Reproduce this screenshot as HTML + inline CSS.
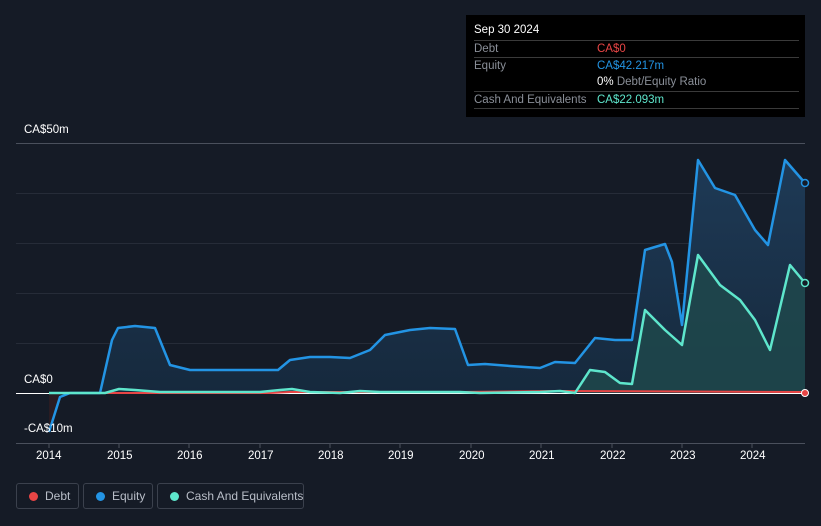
<!DOCTYPE html>
<html><head><meta charset="utf-8"><style>
html,body{margin:0;padding:0;background:#151b26;width:821px;height:526px;overflow:hidden;font-family:"Liberation Sans",sans-serif}
.tt{position:absolute;left:466px;top:15px;width:339px;height:102px;background:#000;}
.tt .h{position:absolute;left:8px;top:9px;color:#fff;font-size:11.5px}
.row{position:absolute;left:8px;width:325px;border-top:1px solid #3a3a3a;height:17px;font-size:11.5px;color:#8a8f98;white-space:nowrap}
.row span{position:absolute;top:2px}
.lg{position:absolute;top:483px;height:26px;border:1px solid #3b414d;border-radius:3px;color:#b9bec8;font-size:12px;box-sizing:border-box;white-space:nowrap}
.lg i{position:absolute;left:12px;top:8px;width:9px;height:9px;border-radius:50%}
.lg span{position:absolute;left:28px;top:5px}
.ax{position:absolute;color:#fff;font-size:11.5px}
</style></head><body>
<svg width="821" height="526" style="position:absolute;left:0;top:0">
<defs><linearGradient id="g" x1="0" y1="0" x2="0" y2="1"><stop offset="0" stop-color="#1e3a56"/><stop offset="1" stop-color="#16293d"/></linearGradient></defs>
<line x1="16" y1="143.5" x2="805" y2="143.5" stroke="#4a505c"/>
<line x1="16" y1="193.5" x2="805" y2="193.5" stroke="#262c38"/>
<line x1="16" y1="243.5" x2="805" y2="243.5" stroke="#262c38"/>
<line x1="16" y1="293.5" x2="805" y2="293.5" stroke="#262c38"/>
<line x1="16" y1="343.5" x2="805" y2="343.5" stroke="#262c38"/>
<line x1="16" y1="443.5" x2="805" y2="443.5" stroke="#4a505c"/>
<polygon points="49,393 49,432 60,393" fill="#2a1c22"/>
<polygon fill="url(#g)" points="60,393 100,393 112,340 118,328 135,326 155,328 170,365 190,370 230,370 260,370 278,370 290,360 310,357 330,357 350,358 370,350 385,335 410,330 430,328 455,329 468,365 485,364 510,366 540,368 555,362 575,363 595,338 615,340 632,340 645,250 665,244 672,262 682,325 698,160 715,188 735,195 755,230 768,245 785,160 805,183 805,393"/>
<polygon fill="#1f4a4c" fill-opacity="0.8" points="575,393 590,370 605,372 620,383 632,384 645,310 665,330 682,345 698,255 720,285 740,300 755,320 770,350 790,265 805,283 805,393"/>
<line x1="16" y1="393.5" x2="805" y2="393.5" stroke="#fff" stroke-width="1"/>
<polyline fill="none" stroke="#e84545" stroke-width="2" points="49,393 270,393 290,392 460,392 560,391 805,392"/>
<polyline fill="none" stroke="#2394e4" stroke-width="2.5" stroke-linejoin="round" points="49,432 60,397 70,393 100,393 112,340 118,328 135,326 155,328 170,365 190,370 230,370 260,370 278,370 290,360 310,357 330,357 350,358 370,350 385,335 410,330 430,328 455,329 468,365 485,364 510,366 540,368 555,362 575,363 595,338 615,340 632,340 645,250 665,244 672,262 682,325 698,160 715,188 735,195 755,230 768,245 785,160 805,183"/>
<polyline fill="none" stroke="#5ee6cc" stroke-width="2.5" stroke-linejoin="round" points="49,393 105,393 119,389 135,390 160,392 260,392 280,390 292,389 310,392 340,393 360,391 380,392 460,392 480,393 540,392 560,391 575,393 590,370 605,372 620,383 632,384 645,310 665,330 682,345 698,255 720,285 740,300 755,320 770,350 790,265 805,283"/>
<circle cx="805" cy="183" r="3.5" fill="#151b26" stroke="#2394e4" stroke-width="1.5"/>
<circle cx="805" cy="283" r="3.5" fill="#151b26" stroke="#5ee6cc" stroke-width="1.5"/>
<circle cx="805" cy="393" r="3.5" fill="#e84545" stroke="#fff" stroke-width="1"/>
<g stroke="#4a505c"><line x1="49" y1="443" x2="49" y2="448"/><line x1="119" y1="443" x2="119" y2="448"/><line x1="189" y1="443" x2="189" y2="448"/><line x1="260" y1="443" x2="260" y2="448"/><line x1="330" y1="443" x2="330" y2="448"/><line x1="400" y1="443" x2="400" y2="448"/><line x1="471" y1="443" x2="471" y2="448"/><line x1="541" y1="443" x2="541" y2="448"/><line x1="612" y1="443" x2="612" y2="448"/><line x1="682" y1="443" x2="682" y2="448"/><line x1="752" y1="443" x2="752" y2="448"/></g>
</svg>
<div class="ax" style="left:24px;top:124px">CA$50m</div>
<div class="ax" style="left:24px;top:374px">CA$0</div>
<div class="ax" style="left:24px;top:423px">-CA$10m</div>
<div class="ax" style="left:36px;top:450px">2014</div>
<div class="ax" style="left:107px;top:450px">2015</div>
<div class="ax" style="left:177px;top:450px">2016</div>
<div class="ax" style="left:248px;top:450px">2017</div>
<div class="ax" style="left:318px;top:450px">2018</div>
<div class="ax" style="left:388px;top:450px">2019</div>
<div class="ax" style="left:459px;top:450px">2020</div>
<div class="ax" style="left:529px;top:450px">2021</div>
<div class="ax" style="left:600px;top:450px">2022</div>
<div class="ax" style="left:670px;top:450px">2023</div>
<div class="ax" style="left:740px;top:450px">2024</div>
<div class="tt">
<div class="h">Sep 30 2024</div>
<div class="row" style="top:25px"><span>Debt</span><span style="left:123px;color:#e84545">CA$0</span></div>
<div class="row" style="top:42px"><span>Equity</span><span style="left:123px;color:#2394e4">CA$42.217m</span></div>
<div class="row" style="top:59px;border-top:none"><span style="left:123px"><b style="color:#fff;font-weight:normal">0%</b> Debt/Equity Ratio</span></div>
<div class="row" style="top:76px"><span>Cash And Equivalents</span><span style="left:123px;color:#5ee6cc">CA$22.093m</span></div>
<div class="row" style="top:93px;height:0"></div>
</div>
<div class="lg" style="left:16px;width:63px"><i style="background:#e84545"></i><span>Debt</span></div>
<div class="lg" style="left:83px;width:70px"><i style="background:#2394e4"></i><span>Equity</span></div>
<div class="lg" style="left:157px;width:147px"><i style="background:#5ee6cc"></i><span>Cash And Equivalents</span></div>
</body></html>
